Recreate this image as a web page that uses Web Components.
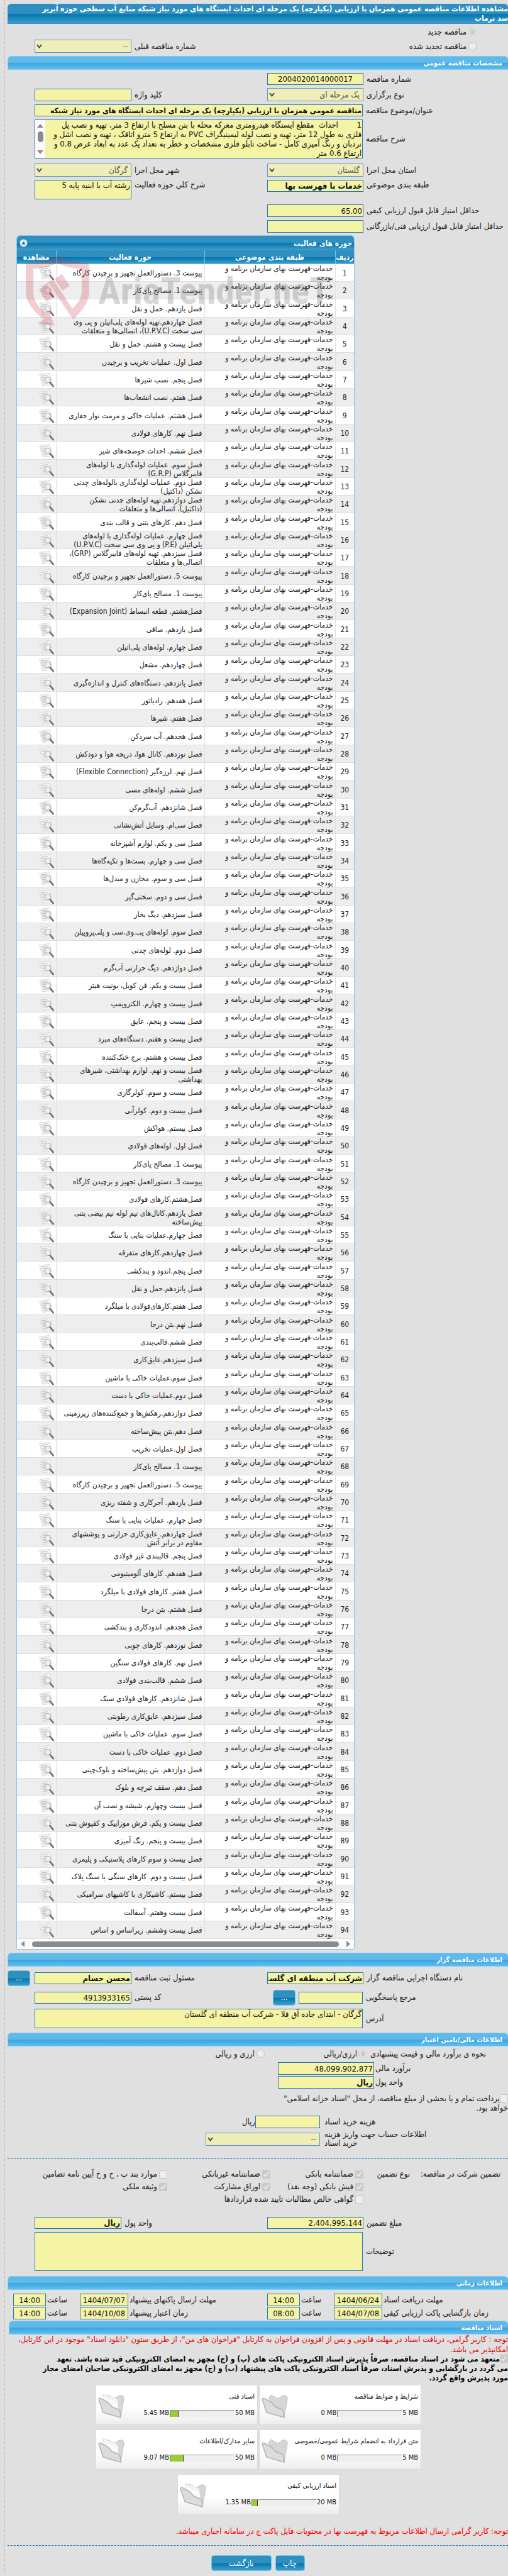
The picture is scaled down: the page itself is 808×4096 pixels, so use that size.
<!DOCTYPE html>
<html lang="fa" dir="rtl">
<head>
<meta charset="utf-8">
<meta name="viewport" content="width=device-width, initial-scale=1">
<title>مشاهده اطلاعات مناقصه عمومی</title>
<style>
    body {
        margin: 0;
        background: #e0e0e0;
        font: 13px/16px "DejaVu Sans Condensed", "DejaVu Sans", "Liberation Sans", sans-serif;
        color: #1c1c1c;
    }
</style>
</head>
<body>
<tender-page></tender-page>

<script>
const SHARED = `
    * { box-sizing: border-box; }
    input, textarea, select, button { font: inherit; margin: 0; }
`

class BaseElement extends HTMLElement {
    constructor() {
        super()
        this.attachShadow({ mode: 'open' })
    }
    attr(name, fallback = '') {
        return this.hasAttribute(name) ? this.getAttribute(name) : fallback
    }
    connectedCallback() {
        this.shadowRoot.innerHTML = `<style>${SHARED}${this.css()}</style>${this.html()}`
    }
}

// title bars: the dark page title and the light section headings
class SectionBar extends BaseElement {
    css() {
        return `
        :host { display: block; }
        h2 {
            margin: 0;
            padding: 0 9px 0 0;
            height: 22px;
            overflow: hidden;
            font-size: 11px;
            line-height: 21px;
            color: #fff;
            border: 1px solid #7bd0f4;
            border-right: 0;
            border-radius: 6px 6px 0 0;
            background: linear-gradient(#62b9e9 0 48%, #36a6e2 52%, #64bcec);
        }
        :host([dark]) h2 {
            padding: 0;
            height: auto;
            font-size: 12px;
            line-height: 15px;
            border-color: #2f8fd0;
            background: linear-gradient(#2f8fbf 0 48%, #0277b0 54%, #459dc8);
        }
        `
    }
    html() {
        return `<h2><slot></slot></h2>`
    }
}

class ScrollBar extends BaseElement {
    css() {
        return `
        :host {
            display: flex;
            align-items: center;
            gap: 12px;
            height: 16px;
            padding: 0 6px;
            background: #fcfcfc;
        }
        i { flex: 1; height: 9px; border-radius: 5px; background: #8b8b8b; }
        svg { width: 6px; height: 10px; fill: #8b8b8b; }
        :host([vertical]) {
            flex-direction: column;
            gap: 6px;
            width: 16px;
            height: auto;
            padding: 6px 0;
        }
        :host([vertical]) i { flex: none; width: 9px; height: 17px; }
        :host([vertical]) svg { width: 10px; height: 6px; }
        :host([vertical]) svg:last-child { margin-top: auto; }
        `
    }
    html() {
        const up = '<svg viewBox="0 0 10 6"><path d="M5 0l5 6H0z"/></svg>'
        const down = '<svg viewBox="0 0 10 6"><path d="M0 0h10L5 6z"/></svg>'
        const right = '<svg viewBox="0 0 6 10"><path d="M0 0l6 5-6 5z"/></svg>'
        const left = '<svg viewBox="0 0 6 10"><path d="M6 0v10L0 5z"/></svg>'
        return this.hasAttribute('vertical') ? `${up}<i></i>${down}` : `${right}<i></i>${left}`
    }
}

// label + control; type is text, select, area or scroll
class FormField extends BaseElement {
    css() {
        return `
        :host { display: flex; align-items: center; gap: var(--gap, 5px); min-width: 0; }
        label { flex: 1; text-align: left; white-space: nowrap; }
        input, select, textarea, .scrolled {
            display: block;
            flex: none;
            width: var(--w, 153px);
            height: 19px;
            padding: 0 1px;
            border: 1px solid #2a78ad;
            border-radius: 0;
            background: #f5f3a4;
            color: #111;
            resize: none;
            overflow: hidden;
        }
        :host([tall]) input { height: 20px; }
        :host([bold]) input { font-weight: bold; }
        :host([small]) input { font-size: 12px; }
        :host([center]) input { text-align: center; }
        .pick { position: relative; flex: none; display: block; }
        select {
            appearance: none;
            height: 21px;
            padding: 0 5px;
            border-color: #5f9bc2;
            background: #efedb8;
            color: #555;
            opacity: 1;
        }
        .pick svg {
            position: absolute;
            left: 3px;
            top: 7px;
            width: 9px;
            height: 7px;
            fill: none;
            stroke: #444;
            stroke-width: 2;
        }
        textarea, .scrolled { height: var(--h, 31px); line-height: 15px; white-space: pre; }
        .scrolled { display: flex; padding: 0; }
        .scrolled textarea { flex: 1; width: auto; height: auto; border: 0; }
        :host([top]) { align-items: flex-start; }
        :host([lines]) label { line-height: 14px; white-space: pre; }
        `
    }
    control() {
        const value = this.attr('value')
        switch (this.attr('type', 'text')) {
            case 'select':
                return `<span class="pick"><select id="c" disabled><option>${value}</option></select>
                    <svg viewBox="0 0 9 7"><path d="M1 1l3.500 4.500L8 1"/></svg></span>`
            case 'area':
                return `<textarea id="c" readonly>${value}</textarea>`
            case 'scroll':
                return `<div class="scrolled"><textarea id="c" readonly>${value}</textarea><scroll-bar vertical></scroll-bar></div>`
            default:
                return `<input id="c" type="text" readonly value="${value}">`
        }
    }
    html() {
        return `<label for="c">${this.attr('label')}</label>${this.control()}<slot></slot>`
    }
}

class TickBox extends BaseElement {
    css() {
        return `
        :host { display: block; }
        label { display: flex; align-items: center; gap: 3px; white-space: nowrap; }
        input { flex: none; width: 13px; height: 13px; }
        :host([wrap]) label { display: block; line-height: 15px; }
        :host([wrap]) input { vertical-align: -2px; }
        `
    }
    html() {
        const checked = this.hasAttribute('checked') ? 'checked' : ''
        return `<label><input type="${this.attr('type', 'checkbox')}" disabled ${checked}><span><slot></slot></span></label>`
    }
}

class PushButton extends BaseElement {
    css() {
        return `
        :host { display: inline-block; flex: none; }
        button {
            display: block;
            width: var(--button, 36px);
            height: 25px;
            padding: 0;
            border: 1px solid #62c8f2;
            border-radius: 4px;
            color: #fff;
            background: linear-gradient(#2f8fbf 0 48%, #0277b0 54%, #459dc8);
        }
        `
    }
    html() {
        return `<button type="button"><slot></slot></button>`
    }
}

const CATEGORY = 'خدمات-فهرست بهای سازمان برنامه و<br>بودجه'
const ACTIVITIES = [
    'پیوست 3. دستورالعمل تجهیز و برچیدن کارگاه',
    'پیوست 1. مصالح پای‌کار',
    'فصل یازدهم. حمل و نقل',
    'فصل چهاردهم.تهیه لوله‌های پلی‌اتیلن و پی وی<br>سی سخت (U.P.V.C)، اتصالی‌ها و متعلقات',
    'فصل بیست و هشتم. حمل و نقل',
    'فصل اول. عملیات تخریب و برچیدن',
    'فصل پنجم. نصب شیرها',
    'فصل هفتم. نصب انشعاب‌ها',
    'فصل هشتم. عملیات خاکی و مرمت نوار حفاری',
    'فصل نهم. کارهای فولادی',
    'فصل ششم. احداث حوضچه‌های شیر',
    'فصل سوم. عملیات لوله‌گذاری با لوله‌های<br>فایبرگلاس (G.R.P)',
    'فصل دوم. عملیات لوله‌گذاری بالوله‌های چدنی<br>نشکن (داکتیل)',
    'فصل دوازدهم.تهیه لوله‌های چدنی نشکن<br>(داکتیل)، اتصالی‌ها و متعلقات',
    'فصل دهم. کارهای بتنی و قالب بندی',
    'فصل چهارم. عملیات لوله‌گذاری با لوله‌های<br>پلی‌اتیلن (P.E) و پی وی سی سخت (U.P.V.C)',
    'فصل سیزدهم. تهیه لوله‌های فایبرگلاس (GRP)،<br>اتصالی‌ها و متعلقات',
    'پیوست 5. دستورالعمل تجهیز و برچیدن کارگاه',
    'پیوست 1. مصالح پای‌کار',
    'فصل‌هشتم. قطعه انبساط (Expansion Joint)',
    'فصل یازدهم. صافی',
    'فصل چهارم. لوله‌های پلی‌اتیلن',
    'فصل چهاردهم. مشعل',
    'فصل پانزدهم. دستگاه‌های کنترل و اندازه‌گیری',
    'فصل هفدهم. رادیاتور',
    'فصل هفتم. شیرها',
    'فصل هجدهم. آب سردکن',
    'فصل نوزدهم. کانال هوا، دریچه هوا و دودکش',
    'فصل نهم. لرزه‌گیر (Flexible Connection)',
    'فصل ششم. لوله‌های مسی',
    'فصل شانزدهم. آب‌گرم‌کن',
    'فصل سی‌ام. وسایل آتش‌نشانی',
    'فصل سی و یکم. لوازم آشپزخانه',
    'فصل سی و چهارم. بست‌ها و تکیه‌گاه‌ها',
    'فصل سی و سوم. مخازن و مبدل‌ها',
    'فصل سی و دوم. سختی‌گیر',
    'فصل سیزدهم. دیگ بخار',
    'فصل سوم. لوله‌های پی.وی.سی و پلی‌پروپیلن',
    'فصل دوم. لوله‌های چدنی',
    'فصل دوازدهم. دیگ حرارتی آب‌گرم',
    'فصل بیست و یکم. فن کویل، یونیت هیتر',
    'فصل بیست و چهارم. الکتروپمپ',
    'فصل بیست و پنجم. عایق',
    'فصل بیست و هفتم. دستگاه‌های مبرد',
    'فصل بیست و هشتم. برج خنک‌کننده',
    'فصل بیست و نهم. لوازم بهداشتی، شیرهای<br>بهداشتی',
    'فصل بیست و سوم. کولرگازی',
    'فصل بیست و دوم. کولرآبی',
    'فصل بیستم. هواکش',
    'فصل اول. لوله‌های فولادی',
    'پیوست 1. مصالح پای‌کار',
    'پیوست 3. دستورالعمل تجهیز و برچیدن کارگاه',
    'فصل‌هشتم.کارهای فولادی',
    'فصل یازدهم.کانال‌های نیم لوله نیم بیضی بتنی<br>پیش‌ساخته',
    'فصل چهارم.عملیات بنایی با سنگ',
    'فصل چهاردهم.کارهای متفرقه',
    'فصل پنجم.اندود و بندکشی',
    'فصل پانزدهم.حمل و نقل',
    'فصل هفتم.کارهای‌فولادی با میلگرد',
    'فصل نهم.بتن درجا',
    'فصل ششم.قالب‌بندی',
    'فصل سیزدهم.عایق‌کاری',
    'فصل سوم.عملیات خاکی با ماشین',
    'فصل دوم.عملیات خاکی با دست',
    'فصل دوازدهم.زهکش‌ها و جمع‌کننده‌های زیرزمینی',
    'فصل دهم.بتن پیش‌ساخته',
    'فصل اول.عملیات تخریب',
    'پیوست 1. مصالح پای‌کار',
    'پیوست 5. دستورالعمل تجهیز و برچیدن کارگاه',
    'فصل یازدهم. آجرکاری و شفته ریزی',
    'فصل چهارم. عملیات بنایی با سنگ',
    'فصل چهاردهم. عایق‌کاری حرارتی و پوششهای<br>مقاوم در برابر آتش',
    'فصل پنجم. قالببندی غیر فولادی',
    'فصل هفدهم. کارهای آلومینیومی',
    'فصل هفتم. کارهای فولادی با میلگرد',
    'فصل هشتم. بتن درجا',
    'فصل هجدهم. اندودکاری و بندکشی',
    'فصل نوزدهم. کارهای چوبی',
    'فصل نهم. کارهای فولادی سنگین',
    'فصل ششم. قالب‌بندی فولادی',
    'فصل شانزدهم. کارهای فولادی سبک',
    'فصل سیزدهم. عایق‌کاری رطوبتی',
    'فصل سوم. عملیات خاکی با ماشین',
    'فصل دوم. عملیات خاکی با دست',
    'فصل دوازدهم. بتن پیش‌ساخته و بلوک‌چینی',
    'فصل دهم. سقف تیرچه و بلوک',
    'فصل بیست وچهارم. شیشه و نصب آن',
    'فصل بیست و یکم. فرش موزاییک و کفپوش بتنی',
    'فصل بیست و پنجم. رنگ آمیزی',
    'فصل بیست و سوم کارهای پلاستیکی و پلیمری',
    'فصل بیست و دوم. کارهای سنگی با سنگ پلاک',
    'فصل بیستم. کاشیکاری با کاشیهای سرامیکی',
    'فصل بیست وهفتم. آسفالت',
    'فصل بیست وششم. زیراساس و اساس'
]

// sheet of paper with a magnifier over it
const VIEW_ICON = `<svg viewBox="0 0 29 28" aria-hidden="true">
    <path d="M1 4L20 1l6 22-19 3z" fill="#f6f6f6" stroke="#d2d2d2"/>
    <path d="M3.500 7l13-2M4.500 10l9-1.500M5.500 13l6-1M6 16l5-1M7 19l5-1M8 22l8-1" stroke="#c4c4c4" stroke-width="1.500"/>
    <circle cx="17" cy="14" r="5.500" fill="#ededed" fill-opacity=".8" stroke="#b4b4b4" stroke-width="1.500"/>
    <path d="M21 19l6.500 7.500" stroke="#707070" stroke-width="3" stroke-linecap="round"/>
</svg>`

class ActivityTable extends BaseElement {
    css() {
        return `
        :host {
            display: block;
            position: relative;
            width: 538px;
            border: 1px solid #8dc3e2;
            border-radius: 6px 6px 3px 3px;
            overflow: hidden;
            background: #fff;
        }
        table { width: 100%; table-layout: fixed; border-collapse: collapse; }
        caption, th {
            font-size: 12px;
            font-weight: bold;
            color: #fff;
            background: linear-gradient(#2f8fbf 0 48%, #0277b0 52%, #459dc8);
        }
        caption div {
            display: flex;
            align-items: center;
            justify-content: space-between;
            height: 23px;
            padding: 0 3px 0 4px;
        }
        caption button { display: flex; padding: 0; border: 0; background: none; }
        caption svg { width: 13px; height: 15px; }
        th {
            height: 22px;
            padding: 0;
            box-shadow: inset 0 -1px #6cc4ee;
            border-left: 1px solid #6cc4ee;
            white-space: nowrap;
        }
        th:last-child, td:last-child { border-left: 0; }
        .no { width: 30px; }
        .category { width: 208px; }
        .view { width: 62px; }
        tbody tr { height: 28px; }
        tbody tr:nth-child(3n) { height: 29px; }
        tbody tr:nth-child(even) { background: #eee; }
        td {
            padding: 0 3px;
            font-size: 12px;
            line-height: 14px;
            border-left: 1px solid #e0e0e0;
            box-shadow: inset 0 -1px #dedede;
            white-space: nowrap;
            color: #222;
        }
        td.num { text-align: center; padding: 0; }
        td a, td svg { display: block; width: 24px; height: 24px; }
        `
    }
    html() {
        const rows = ACTIVITIES.map((name, i) => `<tr>
            <td class="num">${i + 1}</td><td>${CATEGORY}</td><td>${name}</td>
            <td><a href="#row-${i + 1}" aria-label="مشاهده">${VIEW_ICON}</a></td></tr>`).join('')
        return `
        <table>
            <caption><div>حوزه های فعالیت
                <button type="button" aria-label="بستن"><svg viewBox="0 0 13 15"><circle cx="6.500" cy="7.500" r="6" fill="#dcebf6"/><path d="M6.500 5l3 4.500h-6z" fill="#1c6ea4"/></svg></button>
            </div></caption>
            <thead><tr><th class="no">ردیف</th><th class="category">طبقه بندی موضوعی</th><th>حوزه فعالیت</th><th class="view">مشاهده</th></tr></thead>
            <tbody>${rows}</tbody>
        </table>
        <scroll-bar></scroll-bar>
        <site-watermark></site-watermark>`
    }
}

// stamp laid over the first rows of the table
class SiteWatermark extends BaseElement {
    css() {
        return `
        :host {
            position: absolute;
            top: 32px;
            left: 14px;
            display: flex;
            direction: ltr;
            align-items: center;
            gap: 14px;
            pointer-events: none;
        }
        svg { width: 101px; height: 111px; }
        span {
            font: bold 60px/66px "Liberation Sans Narrow", "Roboto Condensed", Roboto, sans-serif;
            color: rgba(110, 110, 110, .28);
        }
        `
    }
    html() {
        return `
        <svg viewBox="60 30 375 412" fill="#c4212f" fill-opacity=".22">
            <path d="M246 30Q160 70 60 75V255Q68 325 165 405L132 432 230 440 190 345 183 375Q108 310 105 255V107Q185 102 246 72 305 102 390 107V250Q384 295 335 342L222 168 190 185 340 405Q430 320 434 250V75Q330 70 246 30z"/>
            <path d="M232 165L274 137 320 208 275 234zM137 232L187 190 232 265 183 300z"/>
        </svg>
        <span>AriaTender.neT</span>`
    }
}

class DocCard extends BaseElement {
    css() {
        return `
        :host {
            display: flex;
            align-items: center;
            width: 258px;
            height: 64px;
            padding: 0 4px 0 3px;
            border: 1px solid #dadada;
            font-size: 11px;
            line-height: 14px;
            color: #111;
            background: linear-gradient(#fff 55%, #ededed);
            box-sizing: border-box;
        }
        .info { flex: 1; display: grid; gap: 12px; }
        .size { display: flex; align-items: center; gap: 1px; white-space: nowrap; }
        .size b { font-weight: normal; direction: ltr; }
        .track {
            display: flex;
            direction: ltr;
            width: 103px;
            height: 11px;
            border-top: 1px solid #999;
            border-left: 1px solid #777;
            background: #eee;
        }
        .track i { width: var(--used); background: #9acd32; border-right: 1px solid #333; }
        svg { flex: none; width: 43px; height: 44px; }
        `
    }
    html() {
        const used = Number(this.attr('used')), total = Number(this.attr('total'))
        const fill = used ? `<i style="--used:${Math.round(used / total * 103) + 2}px"></i>` : ''
        const papers = used ? '<path d="M8 5l23 8 3 24H14z" fill="#fafafa" stroke="#d8d8d8"/><path d="M12 10l19 6" stroke="#e4e4e4"/>' : ''
        return `
        <div class="info"><span><slot></slot></span>
            <div class="size"><b>${total} MB</b><div class="track">${fill}</div><b>${used} MB</b></div>
        </div>
        <svg viewBox="0 0 43 44" aria-hidden="true">
            <path d="M11 12l4-6 11 6 6-4c5-3 10 0 9 5l-5 28z" fill="#d6d6d6" stroke="#c2c2c2"/>
            ${papers}
            <path d="M1 13c0-2 2-2 4-1l11 6 6 7 10 4c4 3 4 8 4 13L8 34z" fill="#dcdcdc" stroke="#b2b2b2" stroke-width="1.500"/>
        </svg>`
    }
}

class TenderPage extends BaseElement {
    css() {
        return `
        :host {
            display: block;
            margin-left: 7px;
            padding: 6px 0 4px 4px;
            border-left: 1px dotted #b4b4b4;
            overflow: hidden;
        }
        .row { display: grid; grid-template-columns: minmax(0, 1fr) 370px 43px; }
        .stack { display: grid; row-gap: 5px; padding: 5px 0 4px; }
        .left { --w: 154px; }
        .wide { --w: 522px; grid-column: 1 / 3; }
        .status { display: grid; padding: 2px 0 5px; }
        .status tick-box { padding-right: 50px; align-self: center; }
        .status > tick-box { height: 23px; padding-top: 3px; box-sizing: border-box; }
        .note-space { margin-bottom: 3px; }
        activity-table { box-sizing: border-box; margin: 0 auto 5px 14px; }
        .reply { --w: 102px; padding-left: 9px; }
        .owner .row > push-button { justify-self: end; }
        .owner .row { align-items: center; min-height: 26px; }
        .owner { padding-bottom: 7px; }
        .mode { display: grid; grid-template-columns: minmax(0, 1fr) 163px 409px; height: 23px; align-items: center; }
        .mode > span { text-align: left; padding-left: 5px; }
        .money { --gap: 2px; display: grid; row-gap: 2px; margin: 2px 0 8px 430px; }
        .treasury { width: 373px; margin-bottom: 4px; }
        .with-unit { display: flex; margin-bottom: 3px; }
        .with-unit span { width: 394px; line-height: 21px; }
        .cost { --gap: 7px; --w: 103px; flex: 1; height: 21px; }
        .account { --gap: 7px; --w: 182px; margin: 0 0 17px 315px; height: 28px; }
        hr { height: 0; margin: 0; border: 0; border-top: 1px dashed #2a78ad; }
        .guarantee {
            display: grid;
            grid-template-columns: 144px minmax(0, 1fr) 148px 164px 254px;
            grid-auto-rows: 20px;
            align-items: center;
            padding: 14px 12px 18px 0;
            white-space: nowrap;
        }
        .guarantee tick-box:nth-child(6), .guarantee tick-box:nth-child(9) { grid-column: 3; }
        .deposit { padding: 0 0 8px; }
        .deposit .unit { --w: 138px; }
        .times { --gap: 2px; display: grid; row-gap: 1px; padding: 6px 0 2px; }
        .times .row { grid-template-columns: minmax(0, 1fr) 106px 298px 106px 9px; }
        .date { --w: 77px; }
        .hour { --w: 52px; }
        p { margin: 0; white-space: nowrap; }
        .red { color: #e00000; }
        .docs { padding-left: 2px; }
        .pledge { font-size: 12px; font-weight: bold; margin-bottom: 3px; color: #000; }
        .cards { display: flex; flex-wrap: wrap; justify-content: center; gap: 7px 2px; padding: 0 120px; }
        .last { margin: 19px 0 14px; color: #f00; }
        .actions { display: flex; justify-content: center; gap: 6px; padding-top: 15px; }
        .print { --button: 47px; }
        .back { --button: 96px; }
        `
    }
    html() {
        const scope = 'احداث  مقطع ایستگاه هیدرومتری معرکه محله با بتن مسلح با ارتفاع 3 متر، تهیه و نصب پل\nفلزی به طول 12 متر، تهیه و نصب لوله لیمینیگراف PVC به ارتفاع 5 مترو اتاقک ، تهیه و نصب اشل و\nنردبان و رنگ آمیزی کامل - ساخت تابلو فلزی مشخصات و خطر به تعداد یک عدد به ابعاد عرض 0.8 و\nارتفاع 0.6 متر'
        return `
        <section-bar dark>مشاهده اطلاعات مناقصه عمومی همزمان با ارزیابی (یکپارچه) یک مرحله ای احداث ایستگاه های مورد نیاز شبکه منابع آب سطحی حوزه آبریز<br>سد نرماب</section-bar>
        <div class="status">
            <tick-box type="radio" checked>مناقصه جدید</tick-box>
            <div class="row">
                <tick-box type="radio">مناقصه تجدید شده</tick-box>
                <form-field class="left" type="select" label="شماره مناقصه قبلی" value="--"></form-field>
            </div>
        </div>

        <section-bar>مشخصات مناقصه عمومی</section-bar>
        <div class="stack">
            <div class="row"><form-field center label="شماره مناقصه" value="2004020014000017"></form-field></div>
            <div class="row">
                <form-field type="select" label="نوع برگزاری" value="یک مرحله ای"></form-field>
                <form-field class="left" tall label="کلید واژه"></form-field>
            </div>
            <div class="row"><form-field class="wide" bold small label="عنوان/موضوع مناقصه" value="مناقصه عمومی همزمان با ارزیابی (یکپارچه) یک مرحله ای احداث ایستگاه های مورد نیاز شبکه"></form-field></div>
            <div class="row"><form-field class="wide note-space" style="--h:62px" type="scroll" label="شرح مناقصه" value="1        ${scope}"></form-field></div>
            <div class="row">
                <form-field type="select" label="استان محل اجرا" value="گلستان"></form-field>
                <form-field class="left" type="select" label="شهر محل اجرا" value="گرگان"></form-field>
            </div>
            <div class="row note-space">
                <form-field top bold label="طبقه بندی موضوعی" value="خدمات با فهرست بها"></form-field>
                <form-field class="left" top type="area" label="شرح کلی حوزه فعالیت" value="رشته آب با ابنیه پایه 5"></form-field>
            </div>
            <div class="row"><form-field tall label="حداقل امتیاز قابل قبول ارزیابی کیفی" value="65.00"></form-field></div>
            <div class="row"><form-field tall label="حداقل امتیاز قابل قبول ارزیابی فنی/بازرگانی"></form-field></div>
        </div>
        <activity-table></activity-table>

        <section-bar>اطلاعات مناقصه گزار</section-bar>
        <div class="stack owner">
            <div class="row">
                <form-field bold label="نام دستگاه اجرایی مناقصه گزار" value="شرکت آب منطقه ای گلستان"></form-field>
                <form-field class="left" bold label="مسئول ثبت مناقصه" value="محسن حسام"></form-field>
                <push-button>...</push-button>
            </div>
            <div class="row">
                <form-field class="reply" label="مرجع پاسخگویی"><push-button>...</push-button></form-field>
                <form-field class="left" label="کد پستی" value="4913933165"></form-field>
            </div>
            <div class="row"><form-field class="wide" type="area" label="آدرس" value="گرگان - ابتدای جاده آق قلا - شرکت آب منطقه ای گلستان"></form-field></div>
        </div>

        <section-bar>اطلاعات مالی/تامین اعتبار</section-bar>
        <div class="mode">
            <span>نحوه ی برآورد مالی و قیمت پیشنهادی</span>
            <tick-box type="radio" checked>ارزی/ریالی</tick-box>
            <tick-box type="radio">ارزی و ریالی</tick-box>
        </div>
        <div class="money">
            <form-field tall label="برآورد مالی" value="48,099,902,877"></form-field>
            <form-field tall bold label="واحد پول" value="ریال"></form-field>
        </div>
        <tick-box class="treasury" wrap>پرداخت تمام و یا بخشی از مبلغ مناقصه، از محل "اسناد خزانه اسلامی"<br>خواهد بود.</tick-box>
        <div class="with-unit"><form-field class="cost" tall label="هزینه خرید اسناد"></form-field><span>ریال</span></div>
        <form-field class="account" lines type="select" label="اطلاعات حساب جهت واریز هزینه\nخرید اسناد" value="--"></form-field>
        <hr>
        <div class="guarantee">
            <span>تضمین شرکت در مناقصه:</span>
            <span>نوع تضمین</span>
            <tick-box checked>ضمانتنامه بانکی</tick-box>
            <tick-box checked>ضمانتنامه غیربانکی</tick-box>
            <tick-box>موارد بند پ ، ح و خ آیین نامه تضامین</tick-box>
            <tick-box checked>فیش بانکی (وجه نقد)</tick-box>
            <tick-box checked>اوراق مشارکت</tick-box>
            <tick-box checked>وثیقه ملکی</tick-box>
            <tick-box>گواهی خالص مطالبات تایید شده قراردادها</tick-box>
        </div>
        <div class="stack deposit">
            <div class="row">
                <form-field label="مبلغ تضمین" value="2,404,995,144"></form-field>
                <form-field class="unit" bold label="واحد پول" value="ریال"></form-field>
            </div>
            <div class="row"><form-field class="wide" style="--h:62px" type="area" label="توضیحات"></form-field></div>
        </div>

        <section-bar>اطلاعات زمانی</section-bar>
        <div class="times">
            <div class="row">
                <form-field class="date" tall center label="مهلت دریافت اسناد" value="1404/06/24"></form-field>
                <form-field class="hour" tall center label="ساعت" value="14:00"></form-field>
                <form-field class="date" tall center label="مهلت ارسال پاکتهای پیشنهاد" value="1404/07/07"></form-field>
                <form-field class="hour" tall center label="ساعت" value="14:00"></form-field>
            </div>
            <div class="row">
                <form-field class="date" tall center label="زمان بازگشایی پاکت ارزیابی کیفی" value="1404/07/08"></form-field>
                <form-field class="hour" tall center label="ساعت" value="08:00"></form-field>
                <form-field class="date" tall center label="زمان اعتبار پیشنهاد" value="1404/10/08"></form-field>
                <form-field class="hour" tall center label="ساعت" value="14:00"></form-field>
            </div>
        </div>

        <div class="docs">
            <section-bar>اسناد مناقصه</section-bar>
            <p class="red">توجه : کاربر گرامی، دریافت اسناد در مهلت قانونی و پس از افزودن فراخوان به کارتابل "فراخوان های من"، از طریق ستون "دانلود اسناد" موجود در این کارتابل،<br>امکانپذیر می باشد.</p>
            <tick-box class="pledge" wrap checked>متعهد می شود در اسناد مناقصه، صرفاً پذیرش اسناد الکترونیکی پاکت های (ب) و (ج) مجهز به امضای الکترونیکی قید شده باشد. تعهد<br>می گردد در بازگشایی و پذیرش اسناد، صرفاً اسناد الکترونیکی پاکت های پیشنهاد (ب) و (ج) مجهز به امضای الکترونیکی صاحبان امضای مجاز<br>مورد پذیرش واقع گردد.</tick-box>
            <div class="cards">
                <doc-card total="5" used="0">شرایط و ضوابط مناقصه</doc-card>
                <doc-card total="50" used="5.45">اسناد فنی</doc-card>
                <doc-card total="5" used="0">متن قرارداد به انضمام شرایط عمومی/خصوصی</doc-card>
                <doc-card total="50" used="9.07">سایر مدارک/اطلاعات</doc-card>
                <doc-card total="20" used="1.35">اسناد ارزیابی کیفی</doc-card>
            </div>
            <p class="last">توجه: کاربر گرامی ارسال اطلاعات مربوط به فهرست بها در محتویات فایل پاکت ج در سامانه اجباری میباشد.</p>
        </div>
        <hr>
        <div class="actions">
            <push-button class="print">چاپ</push-button>
            <push-button class="back">بازگشت</push-button>
        </div>`
    }
}

customElements.define('section-bar', SectionBar)
customElements.define('scroll-bar', ScrollBar)
customElements.define('form-field', FormField)
customElements.define('tick-box', TickBox)
customElements.define('push-button', PushButton)
customElements.define('site-watermark', SiteWatermark)
customElements.define('activity-table', ActivityTable)
customElements.define('doc-card', DocCard)
customElements.define('tender-page', TenderPage)
</script>
</body>
</html>
